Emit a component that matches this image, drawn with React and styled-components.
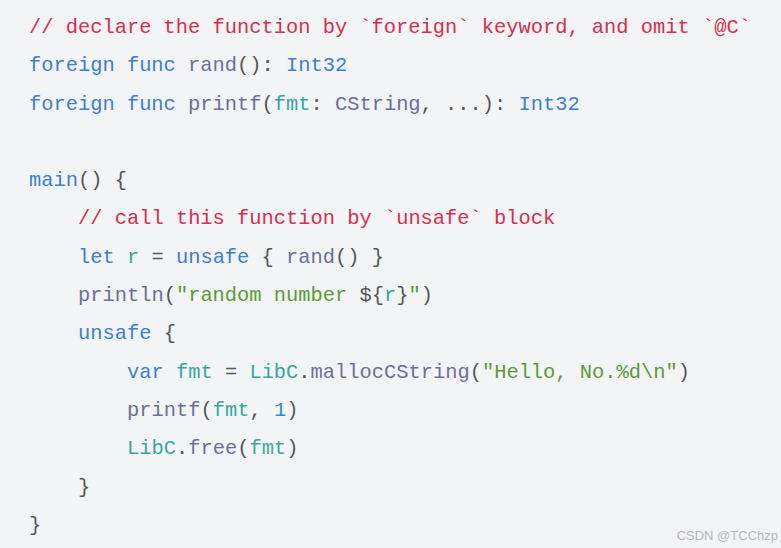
import React from "react";
import styled, { createGlobalStyle } from "styled-components";

const Global = createGlobalStyle`
  html, body { margin: 0; padding: 0; background: #f3f4f6; }
  #root { min-height: 100vh; }
`;

const Page = styled.div`
  position: relative;
  width: 781px;
  height: 548px;
  background: #f3f4f6;
  overflow: hidden;
`;

const Code = styled.pre`
  margin: 0;
  padding: 9px 0 0 29px;
  font-family: "Liberation Mono", "DejaVu Sans Mono", monospace;
  font-size: 20.4px;
  line-height: 38.3px;
  color: #555;
  white-space: pre;
`;

const Line = styled.div`
  height: 38.3px;
  padding-left: ${(p) => (p.$indent || 0) * 49}px;
`;

const colors = {
  c: "#d5304f",
  k: "#3d7fd2",
  f: "#6b6f9e",
  v: "#38a999",
  s: "#5e9a35",
  n: "#2b8fd6",
  p: "#555555",
};

const Tok = styled.span`
  color: ${(p) => colors[p.$t]};
`;

const Watermark = styled.div`
  position: absolute;
  right: 3px;
  bottom: 5px;
  font-family: "Liberation Sans", Arial, sans-serif;
  font-size: 13px;
  color: #b8b8b8;
`;

const lines = [
  [0, [["c", "// declare the function by `foreign` keyword, and omit `@C`"]]],
  [0, [["k", "foreign func "], ["f", "rand"], ["p", "(): "], ["k", "Int32"]]],
  [0, [["k", "foreign func "], ["f", "printf"], ["p", "("], ["v", "fmt"], ["p", ": "], ["f", "CString"], ["p", ", ...): "], ["k", "Int32"]]],
  [0, []],
  [0, [["k", "main"], ["p", "() {"]]],
  [1, [["c", "// call this function by `unsafe` block"]]],
  [1, [["k", "let "], ["v", "r"], ["p", " = "], ["k", "unsafe"], ["p", " { "], ["f", "rand"], ["p", "() }"]]],
  [1, [["f", "println"], ["p", "("], ["s", "\"random number "], ["p", "${"], ["v", "r"], ["p", "}"], ["s", "\""], ["p", ")"]]],
  [1, [["k", "unsafe"], ["p", " {"]]],
  [2, [["k", "var "], ["v", "fmt"], ["p", " = "], ["v", "LibC"], ["p", "."], ["f", "mallocCString"], ["p", "("], ["s", "\"Hello, No.%d\\n\""], ["p", ")"]]],
  [2, [["f", "printf"], ["p", "("], ["v", "fmt"], ["p", ", "], ["n", "1"], ["p", ")"]]],
  [2, [["v", "LibC"], ["p", "."], ["f", "free"], ["p", "("], ["v", "fmt"], ["p", ")"]]],
  [1, [["p", "}"]]],
  [0, [["p", "}"]]],
];

export default function App() {
  return (
    <Page>
      <Global />
      <Code>
        {lines.map(([indent, toks], i) => (
          <Line key={i} $indent={indent}>
            {toks.map(([t, text], j) => (
              <Tok key={j} $t={t}>{text}</Tok>
            ))}
          </Line>
        ))}
      </Code>
      <Watermark>CSDN @TCChzp</Watermark>
    </Page>
  );
}
